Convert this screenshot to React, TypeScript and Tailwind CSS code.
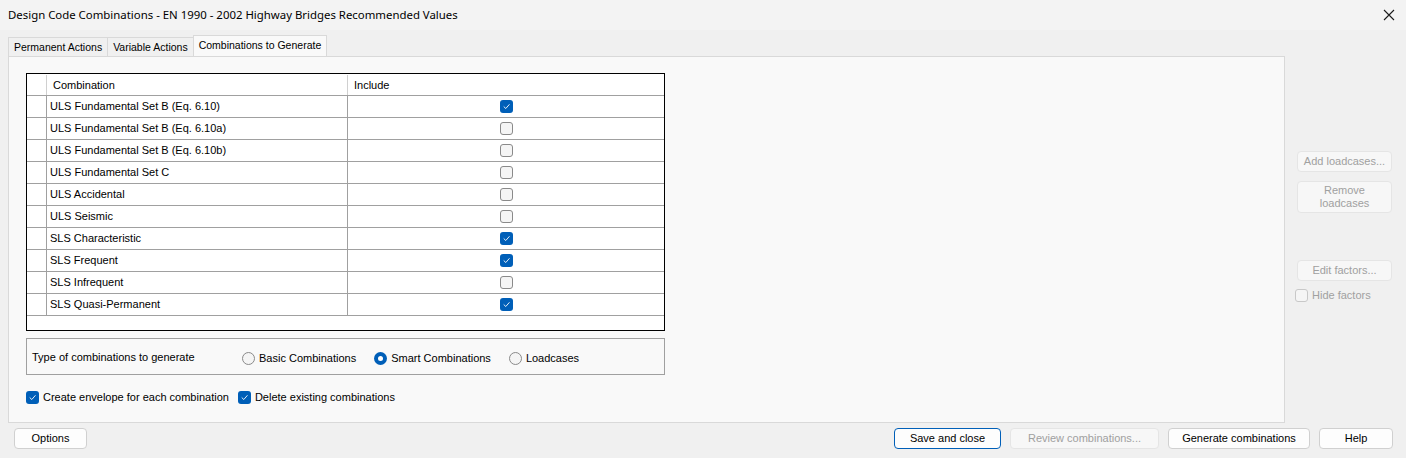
import React from 'react';

const rows: { name: string; include: boolean }[] = [
  { name: 'ULS Fundamental Set B (Eq. 6.10)', include: true },
  { name: 'ULS Fundamental Set B (Eq. 6.10a)', include: false },
  { name: 'ULS Fundamental Set B (Eq. 6.10b)', include: false },
  { name: 'ULS Fundamental Set C', include: false },
  { name: 'ULS Accidental', include: false },
  { name: 'ULS Seismic', include: false },
  { name: 'SLS Characteristic', include: true },
  { name: 'SLS Frequent', include: true },
  { name: 'SLS Infrequent', include: false },
  { name: 'SLS Quasi-Permanent', include: true },
];

function CheckBox({ checked }: { checked: boolean }) {
  if (checked) {
    return (
      <span className="flex h-[13px] w-[13px] shrink-0 items-center justify-center rounded-[3px] bg-[#005fb8]">
        <svg width="9" height="9" viewBox="0 0 9 9" fill="none">
          <path d="M2 4.8 L3.8 6.5 L7.2 2.6" stroke="#ffffff" strokeWidth="0.9" strokeLinecap="round" strokeLinejoin="round" />
        </svg>
      </span>
    );
  }
  return <span className="block h-[13px] w-[13px] shrink-0 rounded-[3px] border border-[#8a8a8a] bg-[#f5f5f5]" />;
}

function Radio({ checked, label }: { checked: boolean; label: string }) {
  return (
    <div className="flex items-center">
      {checked ? (
        <span className="flex h-[13px] w-[13px] items-center justify-center rounded-full bg-[#005fb8]">
          <span className="block h-[5px] w-[5px] rounded-full bg-white" />
        </span>
      ) : (
        <span className="block h-[13px] w-[13px] rounded-full border border-[#8a8a8a] bg-[#f5f5f5]" />
      )}
      <span className="ml-[4px]">{label}</span>
    </div>
  );
}

function Button({
  label,
  disabled = false,
  primary = false,
  className = '',
}: {
  label: string;
  disabled?: boolean;
  primary?: boolean;
  className?: string;
}) {
  const tone = disabled
    ? 'bg-[#f7f7f7] border-[#e5e5e5] text-[#a0a0a0]'
    : primary
      ? 'bg-[#fdfdfd] border-[#005fb8] text-black'
      : 'bg-[#fdfdfd] border-[#d0d0d0] text-black';
  return (
    <div className={`flex items-center justify-center rounded-[4px] border text-center leading-[13px] ${tone} ${className}`}>
      {label}
    </div>
  );
}

function Tab({ label, active = false, className = '' }: { label: string; active?: boolean; className?: string }) {
  return (
    <div
      className={`flex items-center border border-[#d9d9d9] px-[5px] text-[10.5px] ${
        active ? 'h-[22px] border-b-0 bg-[#f9f9f9] pb-[2px]' : 'h-[20px] bg-[#f0f0f0] pt-px'
      } ${className}`}
    >
      {label}
    </div>
  );
}

export default function App() {
  return (
    <div className="flex h-[458px] w-[1406px] flex-col overflow-hidden bg-[#f0f0f0] font-['Liberation_Sans',Arial,sans-serif] text-[11px] text-black">
      {/* title bar */}
      <div className="flex h-[30px] shrink-0 items-center justify-between bg-[#f3f3f3] pl-[8px] pr-[11px]">
        <span className="font-['Noto_Sans',sans-serif] text-[11.4px]">
          Design Code Combinations - EN 1990 - 2002 Highway Bridges Recommended Values
        </span>
        <svg width="12" height="12" viewBox="0 0 12 12">
          <path d="M1 1 L11 11 M11 1 L1 11" stroke="#1a1a1a" strokeWidth="1.1" />
        </svg>
      </div>

      <div className="flex h-[393px] shrink-0">
        <div className="ml-[8px] flex w-[1277px] flex-col">
          {/* tabs */}
          <div className="flex h-[27px] items-end">
            <Tab label="Permanent Actions" />
            <Tab label="Variable Actions" className="-ml-px" />
            <Tab label="Combinations to Generate" active className="-ml-px" />
          </div>

          {/* tab page */}
          <div className="-mt-px h-[367px] border border-[#d9d9d9] bg-[#f9f9f9] pl-[17px] pt-[16px]">
            <div className="flex h-[258px] w-[639px] flex-col border border-black bg-white">
              <div className="flex h-[22px] shrink-0 border-b border-[#a0a0a0] pt-px">
                <div className="w-[20px] border-r border-[#d0d0d0]" />
                <div className="flex w-[301px] items-center border-r border-[#d0d0d0] pl-[6px]">Combination</div>
                <div className="flex flex-1 items-center pl-[6px]">Include</div>
              </div>
              {rows.map((r) => (
                <div key={r.name} className="flex h-[22px] shrink-0 border-b border-[#a0a0a0]">
                  <div className="w-[20px] border-r border-[#a0a0a0]" />
                  <div className="flex w-[301px] items-center border-r border-[#a0a0a0] pl-[3px]">{r.name}</div>
                  <div className="flex flex-1 items-center justify-center">
                    <CheckBox checked={r.include} />
                  </div>
                </div>
              ))}
            </div>

            <div className="mt-[7px] flex h-[37px] w-[639px] items-center border border-[#a0a0a0] pl-[5px] pt-[2px]">
              <span className="w-[210px]">Type of combinations to generate</span>
              <div className="flex items-center gap-[18px] pt-[1px]">
                <Radio checked={false} label="Basic Combinations" />
                <Radio checked label="Smart Combinations" />
                <Radio checked={false} label="Loadcases" />
              </div>
            </div>

            <div className="mt-[14px] flex items-center">
              <CheckBox checked />
              <span className="ml-[4px]">Create envelope for each combination</span>
              <span className="ml-[9px]">
                <CheckBox checked />
              </span>
              <span className="ml-[4px]">Delete existing combinations</span>
            </div>
          </div>
        </div>

        {/* side buttons */}
        <div className="flex flex-col pl-[12px] pt-[121px]">
          <Button label="Add loadcases..." disabled className="h-[21px] w-[95px]" />
          <Button label={'Remove\nloadcases'} disabled className="mt-[9px] h-[32px] w-[95px] whitespace-pre-line" />
          <Button label="Edit factors..." disabled className="mt-[47px] h-[21px] w-[95px]" />
          <div className="mt-[6px] -ml-[2px] flex items-center text-[#a0a0a0]">
            <span className="block h-[13px] w-[13px] rounded-[3px] border border-[#c8c8c8] bg-[#f5f5f5]" />
            <span className="ml-[4px]">Hide factors</span>
          </div>
        </div>
      </div>

      {/* bottom bar */}
      <div className="flex flex-1 items-start pt-[5px]">
        <Button label="Options" className="ml-[14px] h-[21px] w-[73px]" />
        <div className="ml-auto mr-[13px] flex gap-[9px]">
          <Button label="Save and close" primary className="h-[21px] w-[107px]" />
          <Button label="Review combinations..." disabled className="h-[21px] w-[149px]" />
          <Button label="Generate combinations" className="h-[21px] w-[142px]" />
          <Button label="Help" className="h-[21px] w-[74px]" />
        </div>
      </div>
    </div>
  );
}
